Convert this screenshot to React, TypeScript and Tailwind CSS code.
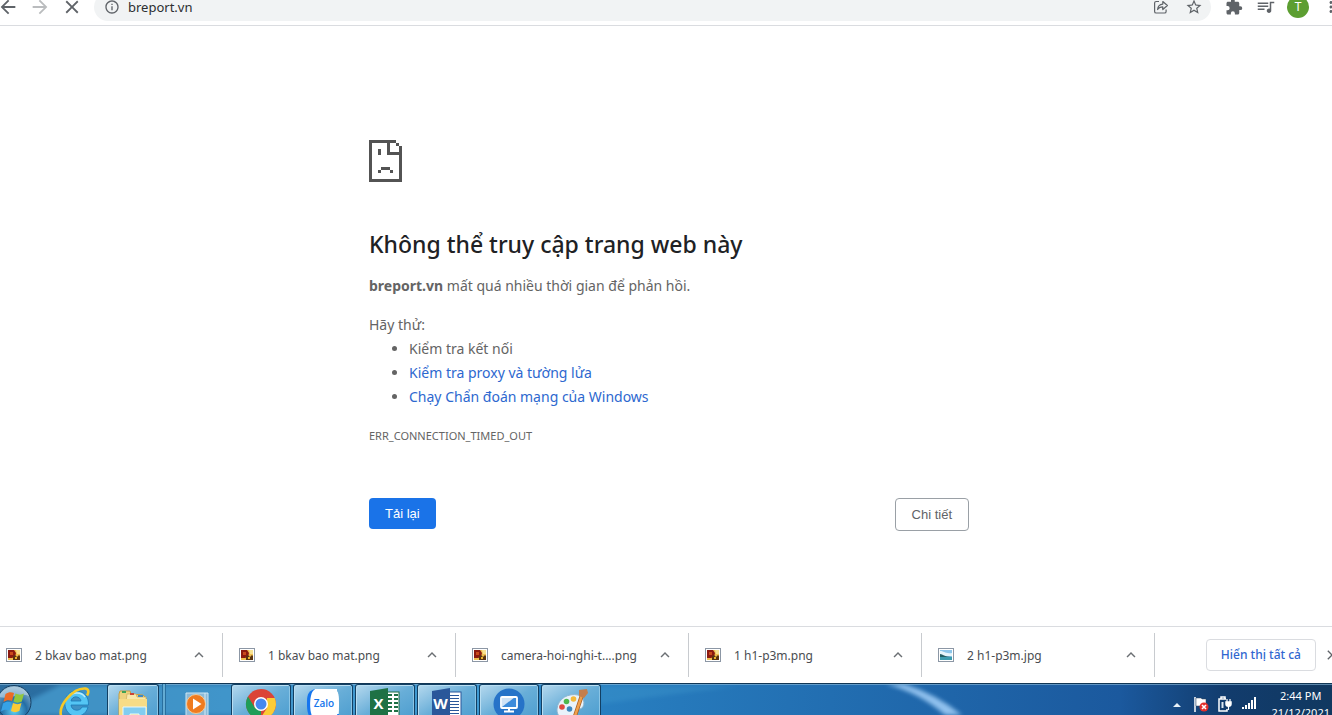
import type { ReactNode } from "react";

const uiFont = "font-['Noto_Sans','Open_Sans',sans-serif]";

const SAD_PAGE: [number, number, number, number][] = [
  [0, 0, 9, 1],
  [0, 0, 1, 14],
  [0, 13, 11, 1],
  [10, 2, 1, 12],
  [9, 1, 1, 1],
  [6, 0, 1, 5],
  [6, 4, 5, 1],
  [3, 3, 1, 2],
  [4, 9, 3, 1],
  [3, 10, 1, 1],
  [7, 10, 1, 1],
];

function SadPageIcon() {
  return (
    <svg className="h-[42px] w-[33px]" viewBox="0 0 11 14" shapeRendering="crispEdges" fill="#535353" aria-hidden="true">
      {SAD_PAGE.map(([x, y, w, h], i) => (
        <rect key={i} x={x} y={y} width={w} height={h} />
      ))}
    </svg>
  );
}

function Glyph({ d, className }: { d: string; className: string }) {
  return (
    <svg viewBox="0 0 24 24" fill="currentColor" className={className} aria-hidden="true">
      <path d={d} />
    </svg>
  );
}

const PATHS = {
  back: "M20 11H7.83l5.59-5.59L12 4l-8 8 8 8 1.41-1.41L7.83 13H20v-2z",
  forward: "M12 4l-1.41 1.41L16.17 11H4v2h12.17l-5.58 5.59L12 20l8-8z",
  close: "M19 6.41L17.59 5 12 10.59 6.41 5 5 6.41 10.59 12 5 17.59 6.41 19 12 13.41 17.59 19 19 17.59 13.41 12z",
  info: "M11 17h2v-6h-2v6zm1-15C6.48 2 2 6.48 2 12s4.48 10 10 10 10-4.48 10-10S17.52 2 12 2zm0 18c-4.41 0-8-3.59-8-8s3.59-8 8-8 8 3.59 8 8-3.59 8-8 8zM11 9h2V7h-2v2z",
  star: "M22 9.24l-7.19-.62L12 2 9.19 8.63 2 9.24l5.46 4.73L5.82 21 12 17.27 18.18 21l-1.63-7.03L22 9.24zM12 15.4l-3.76 2.27 1-4.28-3.32-2.88 4.38-.38L12 6.1l1.71 4.04 4.38.38-3.32 2.88 1 4.28L12 15.4z",
  puzzle: "M20.5 11H19V7c0-1.1-.9-2-2-2h-4V3.5a2.5 2.5 0 0 0-5 0V5H4c-1.1 0-2 .9-2 2v3.8h1.5a2.7 2.7 0 0 1 0 5.4H2V20c0 1.1.9 2 2 2h3.800v-1.5a2.7 2.7 0 0 1 5.4 0V22H17c1.1 0 2-.9 2-2v-4h1.5a2.5 2.5 0 0 0 0-5z",
  queue: "M15 6H1v2h14V6zm0 4H1v2h14v-2zM1 16h9v-2H1v2zM17 5v9.18c-.31-.11-.65-.18-1-.18-1.66 0-3 1.34-3 3s1.34 3 3 3 3-1.34 3-3V7h4V5h-6z",
  more: "M12 8c1.1 0 2-.9 2-2s-.9-2-2-2-2 .9-2 2 .9 2 2 2zm0 2c-1.1 0-2 .9-2 2s.9 2 2 2 2-.9 2-2-.9-2-2-2zm0 6c-1.1 0-2 .9-2 2s.9 2 2 2 2-.9 2-2-.9-2-2-2z",
  chevron: "M12 8l-6 6 1.41 1.41L12 10.83l4.59 4.58L18 14z",
};

function Toolbar() {
  return (
    <header className="h-[26px] shrink-0 overflow-hidden border-b border-[#dadce0] bg-white">
      <div className="-mt-[7px] flex h-7 items-center text-[#5f6368]">
        <button aria-label="Quay lại" className="-ml-[3px] shrink-0">
          <Glyph d={PATHS.back} className="size-[22px]" />
        </button>
        <button aria-label="Tiến" className="ml-2.5 shrink-0 text-[#babcbe]">
          <Glyph d={PATHS.forward} className="size-[22px]" />
        </button>
        <button aria-label="Dừng" className="ml-2.5 shrink-0">
          <Glyph d={PATHS.close} className="size-[22px]" />
        </button>
        <div className="ml-[11px] flex h-7 min-w-0 flex-1 items-center rounded-full bg-[#f1f3f4] pr-2 pl-2.5">
          <Glyph d={PATHS.info} className="size-4 shrink-0" />
          <input
            aria-label="Địa chỉ"
            defaultValue="breport.vn"
            className={`${uiFont} ml-2 min-w-0 flex-1 bg-transparent pt-0.5 text-[13px] text-[#2b2e31] outline-none`}
          />
          <button aria-label="Chia sẻ" className="mr-4 shrink-0">
            <svg viewBox="0 0 16 16" className="size-4" fill="none" stroke="currentColor" strokeWidth="1.2" strokeLinejoin="round" aria-hidden="true">
              <path d="M6 2.500H3.200C2.300 2.500 1.600 3.200 1.600 4.100v8.300c0 .9.700 1.600 1.600 1.600h8.300c.9 0 1.600-.7 1.600-1.600V10.500" />
              <path d="M4.600 10.500c.3-3.400 2.200-5.200 5.200-5.400V2.500l4.600 4-4.600 4V7.900c-2.300 0-4 .8-5.200 2.600z" />
            </svg>
          </button>
          <button aria-label="Đánh dấu trang" className="shrink-0">
            <Glyph d={PATHS.star} className="size-[18px]" />
          </button>
        </div>
        <button aria-label="Tiện ích" className="ml-3.5 shrink-0">
          <Glyph d={PATHS.puzzle} className="size-[18px]" />
        </button>
        <button aria-label="Nội dung nghe nhìn" className="ml-3.5 shrink-0">
          <Glyph d={PATHS.queue} className="size-[18px]" />
        </button>
        <button
          aria-label="Hồ sơ T"
          className="ml-3 flex size-[22px] shrink-0 items-center justify-center rounded-full bg-[#5c9e31] font-[Roboto,sans-serif] text-[12px] text-white"
        >
          T
        </button>
        <button aria-label="Trình đơn" className="-mr-2 ml-[13px] shrink-0">
          <Glyph d={PATHS.more} className="size-[18px]" />
        </button>
      </div>
    </header>
  );
}

function ErrorPage() {
  return (
    <main className={`${uiFont} flex-1 pl-1.5 text-[#646464]`}>
      <div className="mx-auto max-w-[600px] pt-[114px]">
        <SadPageIcon />
        <h1 className="mt-[47px] text-[23px] leading-[30px] font-medium text-[#202124]">Không thể truy cập trang web này</h1>
        <p className="mt-[15px] text-[14px] leading-6">
          <strong className="font-bold">breport.vn</strong> mất quá nhiều thời gian để phản hồi.
        </p>
        <p className="mt-[15px] text-[14px] leading-6">Hãy thử:</p>
        <ul className="list-disc pl-10 text-[14px] leading-6">
          <li>Kiểm tra kết nối</li>
          <li>
            <a href="#proxy" className="text-[#2d68cf]">Kiểm tra proxy và tường lửa</a>
          </li>
          <li>
            <a href="#diagnostics" className="text-[#2d68cf]">Chạy Chẩn đoán mạng của Windows</a>
          </li>
        </ul>
        <p className="mt-[15px] text-[11px] leading-6">ERR_CONNECTION_TIMED_OUT</p>
        <div className="mt-[50px] flex items-start justify-between font-['Liberation_Sans',sans-serif] text-[13px]">
          <button className="h-[31px] rounded bg-[#1a73e8] px-4 text-white">Tải lại</button>
          <button className="h-[33px] rounded border border-[#9aa0a6] px-4 text-[#5f6368]">Chi tiết</button>
        </div>
      </div>
    </main>
  );
}

function PictureIcon({ scenic }: { scenic: boolean }) {
  return (
    <svg viewBox="0 0 16 14" className="h-3.5 w-4 shrink-0" aria-hidden="true">
      <rect x=".5" y=".5" width="15" height="13" fill="#fff" stroke="#8c97a5" />
      {scenic ? (
        <>
          <rect x="2" y="2" width="12" height="10" fill="#8cc6ea" />
          <path d="M2 3c4 0 5 3 12 2v3H2z" fill="#e6f5fb" />
          <path d="M2 6c3 0 4 3 12 3v1H2z" fill="#245d62" />
          <path d="M2 9h12v3H2z" fill="#3c9cae" />
        </>
      ) : (
        <>
          <rect x="2" y="2" width="12" height="10" fill="#efbf50" />
          <path d="M2 2h6l2 3-1 4-3 1H2z" fill="#8c1a10" />
          <path d="M4 4h3v3H4z" fill="#c94a1c" />
          <path d="M7 8l2-1 2 2 2-2 1 1v4H7z" fill="#5a3410" />
          <path d="M10 2h4v4h-3z" fill="#f8e190" />
          <path d="M9 9h2v2H9z" fill="#f0b32c" />
        </>
      )}
    </svg>
  );
}

const DOWNLOADS = [
  { name: "2 bkav bao mat.png", scenic: false },
  { name: "1 bkav bao mat.png", scenic: false },
  { name: "camera-hoi-nghi-t....png", scenic: false },
  { name: "1 h1-p3m.png", scenic: false },
  { name: "2 h1-p3m.jpg", scenic: true },
];

function DownloadShelf() {
  return (
    <section aria-label="Tệp tải xuống" className={`${uiFont} flex h-[57px] shrink-0 items-center overflow-hidden border-t border-[#dadce0] bg-white`}>
      <ul className="-ml-2.5 flex min-w-0 flex-1">
        {DOWNLOADS.map((file) => (
          <li key={file.name} className="flex h-11 w-[233px] shrink-0 items-center border-r border-[#c8cbcf] pr-3.5 pl-4">
            <PictureIcon scenic={file.scenic} />
            <span className="ml-[13px] flex-1 pt-0.5 text-[12px] whitespace-nowrap text-[#4a4d51]">{file.name}</span>
            <button aria-label={`Tùy chọn cho ${file.name}`} className="text-[#6b6f73]">
              <Glyph d={PATHS.chevron} className="size-[18px]" />
            </button>
          </li>
        ))}
      </ul>
      <button className="h-8 shrink-0 rounded border border-[#dadce0] px-3.5 text-[12px] font-medium text-[#2f66d0]">Hiển thị tất cả</button>
      <button aria-label="Đóng" className="-mr-2 ml-2 shrink-0 text-[#5f6368]">
        <Glyph d={PATHS.close} className="size-4" />
      </button>
    </section>
  );
}

function Task({ label, open = true, className, children }: { label: string; open?: boolean; className: string; children: ReactNode }) {
  const frame = open
    ? "rounded-t-[3px] border border-b-0 border-[#123f63] bg-linear-to-br from-[#b5d9ee] via-[#68aed8] to-[#4b9dcf] shadow-[inset_1px_1px_0_#b9def2,inset_-1px_0_0_#8cc5e5]"
    : "";
  return (
    <button aria-label={label} className={`flex h-9 shrink-0 items-start justify-center ${frame} ${className}`}>
      {children}
    </button>
  );
}

function StartIcon() {
  return (
    <svg viewBox="0 0 32 31" className="h-[31px] w-8 shrink-0" aria-hidden="true">
      <defs>
        <radialGradient id="orb" cx=".5" cy=".75" r=".75">
          <stop offset="0" stopColor="#5fd0f5" />
          <stop offset=".5" stopColor="#246da5" />
          <stop offset="1" stopColor="#93b8d0" />
        </radialGradient>
      </defs>
      <circle cx="14" cy="18.500" r="17" fill="url(#orb)" stroke="#153f63" />
      <path d="M-1 13C3 0 24-1 29 12 20 8 10 16-1 13z" fill="#d6e8f2" opacity=".5" />
      <path d="M5.500 10c3-2 5.500-2 8.500-1l-2 8c-3-1-5.500-1-8.500 1z" fill="#ed6b25" />
      <path d="M15.500 9.500c3 1.500 6 1.500 8.500 0l-2.200 8c-3 1.500-5.500 1.500-8.300 0z" fill="#92c83e" />
      <path d="M3 19.500c3-2 5.500-2 8.500-1l-2 8c-3-1-5.500-1-8.500 1z" fill="#37a2e6" />
      <path d="M13 19c3 1.500 6 1.500 8.500 0l-2.200 8c-3 1.500-5.500 1.500-8.300 0z" fill="#fccb35" />
    </svg>
  );
}

function ExplorerEIcon() {
  return (
    <svg viewBox="0 0 34 32" className="mt-0.5 h-8 w-[34px]" aria-hidden="true">
      <path d="M30.500 19H13c.4 6 9 7 11 2h6c-2 8-9 10-14 9C3 27 4 5 18 5c8 0 13 6 12.500 14zM13 15h10c-.4-5-9-6-10 0z" fill="#54c5f4" stroke="#1a78b7" strokeWidth=".8" />
      <path d="M10 12c3-6 13-7 17-1" fill="none" stroke="#bceafd" strokeWidth="1.500" />
      <path d="M3.500 31C-1 20 15 2 27 2.500c4 .3 4 4 2 7" fill="none" stroke="#f5c928" strokeWidth="2.600" />
    </svg>
  );
}

function FolderIcon() {
  return (
    <svg viewBox="0 0 34 32" className="mt-1 h-8 w-[34px]" aria-hidden="true">
      <path d="M3 5l1-3h10l1 3 12 1 3 3v23H3z" fill="#ecd27f" stroke="#c99d3f" />
      <path d="M11 5h9l1 3h9v5H10z" fill="#f8e8ad" stroke="#d0ad59" strokeWidth=".7" />
      <path d="M3 10h28v22H3z" fill="#f7dc86" />
      <path d="M6 2h4v2H6z" fill="#3ea455" />
      <path d="M14 4h4v2h-4z" fill="#cb4437" />
      <path d="M22 6h5v2h-5z" fill="#3d8ac8" />
      <path d="M7 18h23v14h-7v-7h-9v7H7z" fill="#82cdf0" stroke="#e4f8ff" />
    </svg>
  );
}

function PlayerIcon() {
  return (
    <svg viewBox="0 0 26 24" className="mt-2 h-6 w-[26px]" aria-hidden="true">
      <path d="M2 1h22v23H2z" fill="#8bbad8" stroke="#cce5f2" />
      <path d="M21 1v23" stroke="#d6ecf6" />
      <circle cx="12" cy="12" r="9.500" fill="#ef7b20" stroke="#ffd5a0" strokeWidth=".8" />
      <path d="M9 6.500l8.500 5.500L9 17.500z" fill="#fff" />
    </svg>
  );
}

function ChromeIcon() {
  return (
    <svg viewBox="0 0 32 32" className="mt-[3px] size-8" aria-hidden="true">
      <circle cx="16" cy="16" r="15" fill="#db4437" />
      <path d="M3 8.500L10 20l6 3v8A15 15 0 0 1 3 8.500z" fill="#1f9d58" />
      <path d="M15 31l7-11V10h7.700A15 15 0 0 1 15 31z" fill="#fbcc36" />
      <circle cx="16" cy="16" r="7" fill="#fff" />
      <circle cx="16" cy="16" r="5.500" fill="#4688f1" />
    </svg>
  );
}

function ZaloIcon() {
  return (
    <svg viewBox="0 0 32 32" className="mt-[3px] size-8" aria-hidden="true">
      <path d="M8 1C0 3 0 9 0 15s0 12 5 17h8V1z" fill="#1475ef" />
      <path d="M11 1h14c6 0 7 4 7 14s0 17-4 17H7C2 26 2 8 6 3c1-1 2-2 5-2z" fill="#fff" />
      <path d="M7 28c5 1 10 0 25-2v6H6z" fill="#1475ef" />
      <path d="M8 1h22v26H10c-5-4-6-22-2-26z" fill="#fff" />
      <text x="17" y="19" textAnchor="middle" fill="#1475ec" fontFamily="Open Sans, sans-serif" fontSize="10" fontWeight="600">
        Zalo
      </text>
    </svg>
  );
}

function OfficeIcon({ letter, sheet }: { letter: string; sheet: boolean }) {
  const ink = sheet ? "#1e7145" : "#2a579a";
  return (
    <svg viewBox="0 0 32 32" className="mt-[3px] size-8" aria-hidden="true">
      <rect x="16" y="4" width="14" height="24" fill="#fff" stroke={ink} />
      {sheet ? (
        <path d="M19 7h4m2 0h4M19 11h4m2 0h4M19 15h4m2 0h4M19 19h4m2 0h4M19 23h4m2 0h4" stroke={ink} strokeWidth="2" />
      ) : (
        <path d="M19 7.500h9M19 10.500h9M19 13.500h9M19 16.500h9M19 19.500h9M19 22.500h9M19 25.500h9" stroke={ink} strokeWidth="1.200" />
      )}
      <path d="M1 3l18-3v32L1 29z" fill={ink} />
      <text x="9.500" y="21" textAnchor="middle" fill="#fff" fontFamily="Open Sans, sans-serif" fontSize="15" fontWeight="700">
        {letter}
      </text>
    </svg>
  );
}

function RemoteIcon() {
  return (
    <svg viewBox="0 0 32 32" className="mt-[3px] size-8" aria-hidden="true">
      <circle cx="16" cy="16" r="15.500" fill="#2673c8" />
      <rect x="8" y="9" width="16" height="11" rx="1" fill="#3c8bdb" stroke="#fff" strokeWidth="1.800" />
      <path d="M9 19L22 9H9z" fill="#fff" opacity=".75" />
      <path d="M16 20v3M11 23.500h10" stroke="#fff" strokeWidth="2" />
    </svg>
  );
}

function PaintIcon() {
  return (
    <svg viewBox="0 0 34 32" className="mt-1 h-8 w-[34px]" aria-hidden="true">
      <path d="M3 20C4 9 15 4 24 6c8 2 7 13 2 14-5 0-4 3-3 6-3 8-21 6-20-6z" fill="#e9f3fa" stroke="#8db4cf" />
      <circle cx="8" cy="18" r="2.800" fill="#e04a40" />
      <circle cx="12.500" cy="12.500" r="2.800" fill="#4fb94d" />
      <circle cx="19.500" cy="10" r="2.800" fill="#f4b93a" />
      <circle cx="15.500" cy="20" r="2.800" fill="#3e88bd" />
      <path d="M28 6L20 30" stroke="#a85f23" strokeWidth="4" />
      <path d="M28 6L20 30" stroke="#f0a04b" strokeWidth="2.500" />
      <path d="M25 1l8-1 1 4-4 5-5-2z" fill="#c47e4b" />
    </svg>
  );
}

function Tray() {
  return (
    <div className="flex h-[31px] shrink-0 items-start text-white">
      <button aria-label="Hiện biểu tượng ẩn" className="mt-[18px] shrink-0">
        <svg viewBox="0 0 8 5" className="h-[5px] w-2" fill="#e8f1f8" aria-hidden="true">
          <path d="M0 5l4-4 4 4z" />
        </svg>
      </button>
      <svg viewBox="0 0 16 16" className="mt-3 ml-3 size-4 shrink-0" aria-hidden="true">
        <path d="M2 1v15" stroke="#fff" strokeWidth="1.500" />
        <path d="M3 2h5l1 1h4v7H3z" fill="#fff" stroke="#30465f" strokeWidth=".5" />
        <circle cx="11" cy="11" r="4.500" fill="#e32f2b" />
        <path d="M9 9l4 4m0-4l-4 4" stroke="#fff" strokeWidth="1.600" />
      </svg>
      <svg viewBox="0 0 16 16" className="mt-3 ml-2 size-4 shrink-0" fill="none" stroke="#fff" strokeWidth="1.500" aria-hidden="true">
        <path d="M9 3H2v12h8v-2M4 3V1h4v2" />
        <path d="M4.500 6h2v6h-2z" fill="#dce8f2" stroke="none" />
        <path d="M9 6h5v2c0 3-5 3-5 0z" fill="#fff" />
        <path d="M10 6V3m3 3V3M11.500 10v4" strokeWidth="1.200" />
      </svg>
      <svg viewBox="0 0 16 14" className="mt-3 ml-2 h-3.5 w-4 shrink-0" fill="#fff" aria-hidden="true">
        <path d="M1 11h2v2H1zM4 9h2v4H4zM7 7h2v6H7zM10 4h2v9h-2zM13 1h2v12h-2z" />
      </svg>
      <time dateTime="2021-12-21T14:44" className={`${uiFont} mr-0.5 ml-3.5 pt-[3px] text-center text-[11px] leading-[17px] whitespace-nowrap`}>
        2:44 PM
        <br />
        21/12/2021
      </time>
    </div>
  );
}

function Taskbar() {
  return (
    <footer className="relative flex h-8 shrink-0 items-start overflow-hidden border-t border-[#123755] bg-linear-to-r from-[#2b6c9e] from-0% via-[#2a84c5] via-40% to-[#1b599e] to-84%">
      <svg className="absolute inset-0 h-full w-full" viewBox="0 0 1332 31" preserveAspectRatio="none" aria-hidden="true">
        <defs>
          <linearGradient id="dusk">
            <stop offset="0" stopColor="#123c6d" stopOpacity="0" />
            <stop offset=".5" stopColor="#123c6d" />
            <stop offset="1" stopColor="#103860" />
          </linearGradient>
          <filter id="soft">
            <feGaussianBlur stdDeviation="2" />
          </filter>
        </defs>
        <path d="M0 31L60 1h480L500 31z" fill="#55b4e6" opacity=".5" filter="url(#soft)" />
        <path d="M600 20Q690 8 740 2H600z" fill="#5cb9df" opacity=".18" filter="url(#soft)" />
        <path d="M886 0h18q32 10 58 31h-17Q920 9 886 0z" fill="#a5d2fa" opacity=".85" filter="url(#soft)" />
        <rect x="1120" width="212" height="31" fill="url(#dusk)" />
        <path d="M0 .5h1332" stroke="#8ebcdc" opacity=".6" />
      </svg>
      <nav aria-label="Thanh tác vụ" className="relative flex min-w-0 flex-1 items-start">
        <button aria-label="Start" className="shrink-0">
          <StartIcon />
        </button>
        <Task label="Internet Explorer" open={false} className="ml-3 w-[62px]"><ExplorerEIcon /></Task>
        <Task label="Explorer" className="ml-px w-[52px]"><FolderIcon /></Task>
        <span className="ml-[3px] h-9 w-1 shrink-0 border-x border-[#286f9f] bg-[#64acd3]" />
        <Task label="Media Player" open={false} className="mr-1 w-[61px]"><PlayerIcon /></Task>
        <div className="flex shrink-0 gap-0.5">
          <Task label="Chrome" className="w-[60px]"><ChromeIcon /></Task>
          <Task label="Zalo" className="w-[60px]"><ZaloIcon /></Task>
          <Task label="Excel" className="w-[60px]"><OfficeIcon letter="X" sheet /></Task>
          <Task label="Word" className="w-[60px]"><OfficeIcon letter="W" sheet={false} /></Task>
          <Task label="Remote Desktop" className="w-[60px]"><RemoteIcon /></Task>
          <Task label="Paint" className="w-[60px]"><PaintIcon /></Task>
        </div>
      </nav>
      <div className="relative"><Tray /></div>
    </footer>
  );
}

export default function App() {
  return (
    <div className="flex min-h-screen flex-col overflow-hidden bg-white">
      <Toolbar />
      <ErrorPage />
      <DownloadShelf />
      <Taskbar />
    </div>
  );
}
